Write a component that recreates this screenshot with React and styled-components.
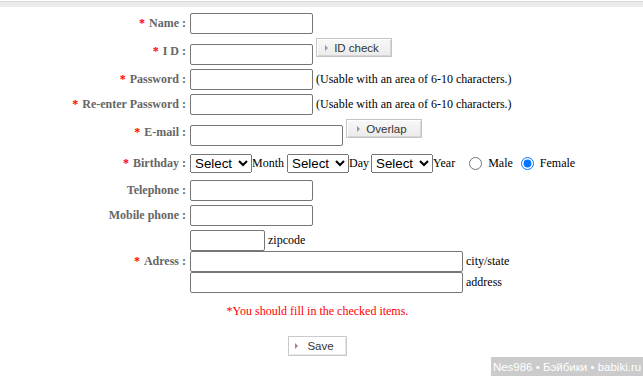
import React from 'react';
import styled, { createGlobalStyle } from 'styled-components';

const Global = createGlobalStyle`
  html, body { margin: 0; padding: 0; background: #fff; }
  body {
    font-family: "Liberation Serif", "Times New Roman", serif;
    font-size: 12px;
    color: #000;
  }
`;

const Page = styled.div`
  width: 643px;
  height: 376px;
  position: relative;
  overflow: hidden;
`;

const TopBar = styled.div`
  height: 5px;
  margin-top: 1px;
  border-top: 1px solid #d9d9d9;
  background: #ebebeb;
`;

const Form = styled.div`
  display: grid;
  grid-template-columns: 186px 1fr;
  column-gap: 4px;
  row-gap: 4px;
  margin-top: 6px;
`;

const Label = styled.div`
  display: flex;
  align-items: center;
  justify-content: flex-end;
  font-weight: bold;
  color: #666;
  white-space: nowrap;
`;

const Star = styled.span`
  color: #f00;
  margin-right: 4px;
`;

const Field = styled.div`
  display: flex;
  align-items: ${(p) => (p.$top ? 'flex-start' : 'center')};
  min-height: ${(p) => p.$h || 21}px;
  white-space: nowrap;
`;

const Stack = styled.div`
  display: flex;
  flex-direction: column;
`;

const Line = styled.div`
  display: flex;
  align-items: center;
  height: 21px;
`;

const TextInput = styled.input`
  box-sizing: border-box;
  width: ${(p) => p.$w}px;
  height: 21px;
  margin: ${(p) => p.$mt || 0}px 0 0 0;
  padding: 1px 2px;
  border: 1px solid #767676;
  border-radius: 2px;
  background: #fff;
  font: 13.33px "Liberation Sans", Arial, sans-serif;
  flex: none;
`;

const Select = styled.select`
  box-sizing: border-box;
  width: 62px;
  height: 19px;
  margin: 0;
  font: 13.33px "Liberation Sans", Arial, sans-serif;
  color: #000;
  flex: none;
`;

const Word = styled.span`
  margin-left: ${(p) => p.$ml || 0}px;
  margin-right: ${(p) => p.$mr || 0}px;
  color: #000;
`;

const Radio = styled.input`
  width: 13px;
  height: 13px;
  margin: 0 3px 0 ${(p) => p.$ml || 5}px;
  flex: none;
`;

const ImgButton = styled.button`
  box-sizing: border-box;
  width: ${(p) => p.$w}px;
  height: ${(p) => p.$h || 19}px;
  margin: 0 0 0 ${(p) => (p.$ml === undefined ? 3 : p.$ml)}px;
  padding: 0 ${(p) => (p.$light ? 6 : 4)}px 0 0;
  display: inline-flex;
  align-items: center;
  justify-content: center;
  gap: ${(p) => (p.$light ? 9 : 6)}px;
  border: 1px solid ${(p) => (p.$light ? '#cacaca' : '#c4c4c4')};
  background: ${(p) => (p.$light ? '#fff' : 'linear-gradient(#f8f8f8, #ebebeb)')};
  box-shadow: inset 1px 1px 0 #fff, inset -1px -1px 0 ${(p) => (p.$light ? '#e6e6e6' : '#d6d6d6')};
  font: 11.5px "Liberation Sans", Arial, sans-serif;
  color: #333;
  flex: none;
  cursor: pointer;
`;

const Arrow = styled.span`
  width: 0;
  height: 0;
  border-left: 3px solid ${(p) => p.$c || '#9a9a9a'};
  border-top: 3px solid transparent;
  border-bottom: 3px solid transparent;
`;

const Footer = styled.div`
  width: 635px;
  display: flex;
  flex-direction: column;
  align-items: center;
`;

const Message = styled.div`
  margin-top: 11px;
  line-height: 14px;
  color: #f00;
`;

const SaveWrap = styled.div`
  margin-top: 18px;
  display: flex;
`;

const Watermark = styled.div`
  position: absolute;
  right: 0;
  bottom: 0;
  width: 152px;
  height: 19px;
  background: #cbcbcb;
  color: #fff;
  font: 11.5px "Liberation Sans", Arial, sans-serif;
  display: flex;
  align-items: center;
  justify-content: center;
`;

function Req({ children }) {
  return (
    <Label>
      <Star>*</Star>
      {children}
    </Label>
  );
}

const HINT = '(Usable with an area of 6-10 characters.)';

export default function App() {
  return (
    <Page>
      <Global />
      <TopBar />
      <Form>
        <Req>Name :</Req>
        <Field>
          <TextInput $w={123} />
        </Field>

        <Req>I D :</Req>
        <Field $top $h={27}>
          <TextInput $w={123} $mt={6} />
          <ImgButton $w={76}>
            <Arrow />
            ID check
          </ImgButton>
        </Field>

        <Req>Password :</Req>
        <Field>
          <TextInput $w={123} type="password" />
          <Word $ml={3}>{HINT}</Word>
        </Field>

        <Req>Re-enter Password :</Req>
        <Field>
          <TextInput $w={123} type="password" />
          <Word $ml={3}>{HINT}</Word>
        </Field>

        <Req>E-mail :</Req>
        <Field $top $h={27}>
          <TextInput $w={153} $mt={6} />
          <ImgButton $w={76}>
            <Arrow />
            Overlap
          </ImgButton>
        </Field>

        <Req>Birthday :</Req>
        <Field $h={26}>
          <Select defaultValue="s">
            <option value="s">Select</option>
          </Select>
          <Word $mr={3}>Month</Word>
          <Select defaultValue="s">
            <option value="s">Select</option>
          </Select>
          <Word $mr={2}>Day</Word>
          <Select defaultValue="s">
            <option value="s">Select</option>
          </Select>
          <Word $mr={9}>Year</Word>
          <Radio type="radio" name="g" />
          <Word $ml={3}>Male</Word>
          <Radio type="radio" name="g" defaultChecked $ml={8} />
          <Word $ml={3}>Female</Word>
        </Field>

        <Label>Telephone :</Label>
        <Field>
          <TextInput $w={123} />
        </Field>

        <Label>Mobile phone :</Label>
        <Field>
          <TextInput $w={123} />
        </Field>

        <Req>Adress :</Req>
        <Stack>
          <Line>
            <TextInput $w={75} />
            <Word $ml={3}>zipcode</Word>
          </Line>
          <Line>
            <TextInput $w={273} />
            <Word $ml={3}>city/state</Word>
          </Line>
          <Line>
            <TextInput $w={273} />
            <Word $ml={3}>address</Word>
          </Line>
        </Stack>
      </Form>

      <Footer>
        <Message>*You should fill in the checked items.</Message>
        <SaveWrap>
          <ImgButton $w={59} $h={20} $ml={0} $light>
            <Arrow $c="#a58878" />
            Save
          </ImgButton>
        </SaveWrap>
      </Footer>

      <Watermark>Nes986 • Бэйбики • babiki.ru</Watermark>
    </Page>
  );
}
